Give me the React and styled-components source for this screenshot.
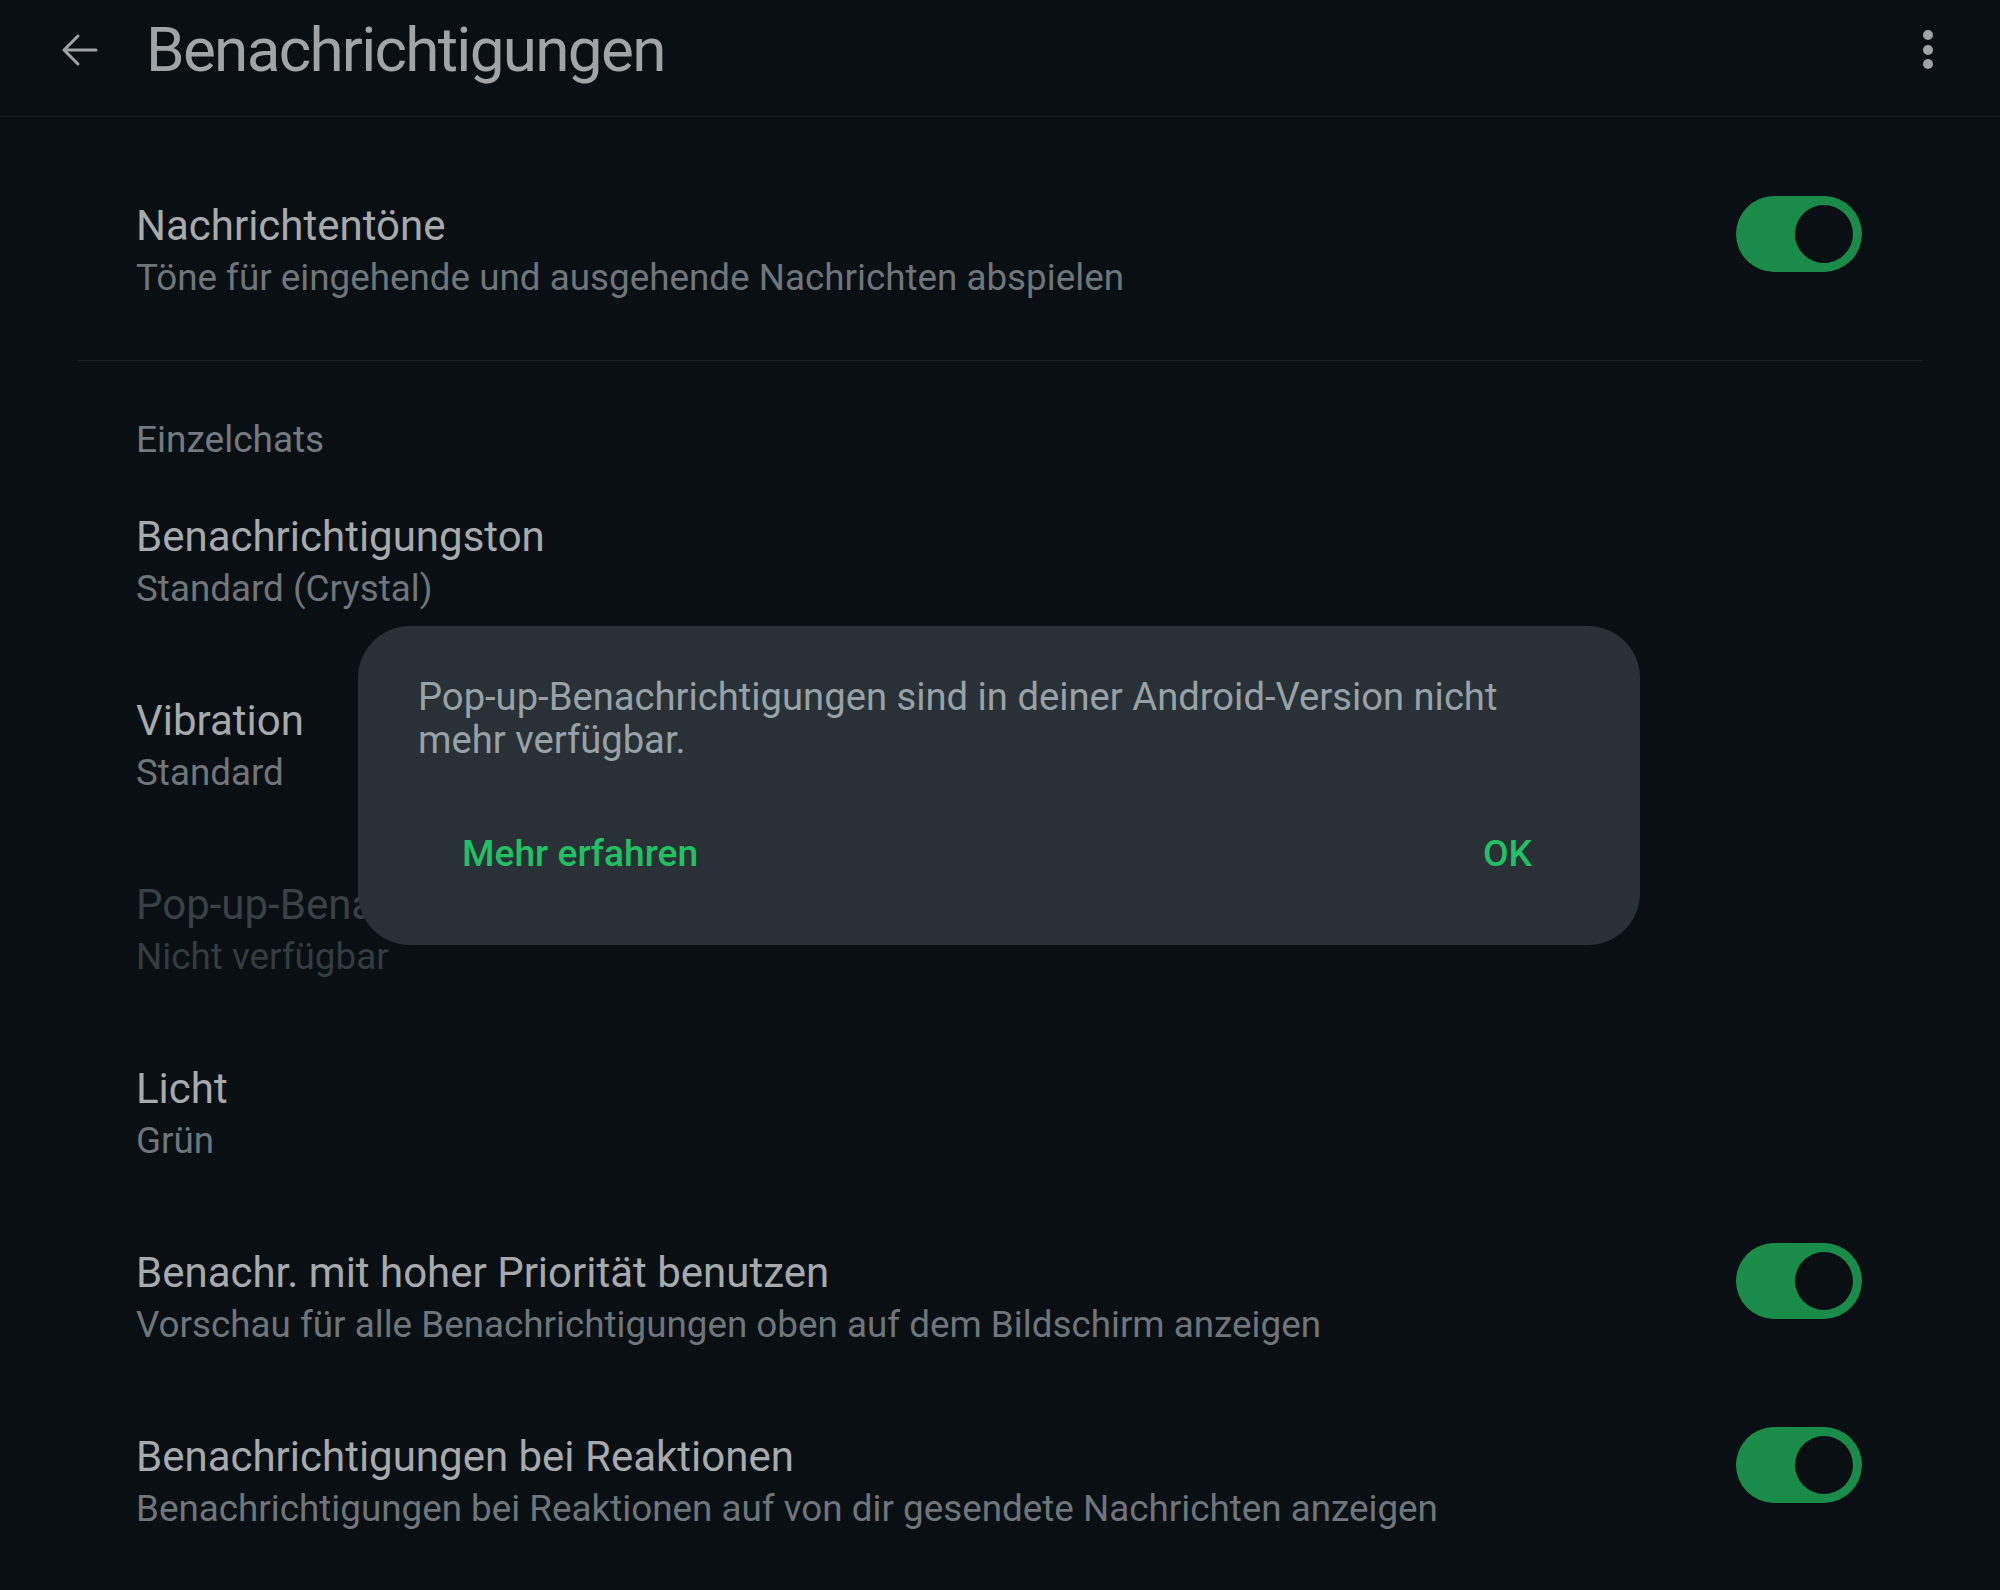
import React from "react";
import styled, { createGlobalStyle } from "styled-components";

const GlobalStyle = createGlobalStyle`
  html, body {
    margin: 0;
    padding: 0;
    background: #0a0f13;
  }
  * {
    box-sizing: border-box;
  }
`;

const Screen = styled.div`
  position: relative;
  width: 2000px;
  height: 1590px;
  overflow: hidden;
  background: #0a0f13;
  font-family: Roboto, "Liberation Sans", sans-serif;
`;

const Header = styled.header`
  display: flex;
  align-items: center;
  height: 117px;
  padding: 0 67px 17px 60px;
  border-bottom: 1px solid #161c20;
`;

const BackButton = styled.button`
  display: flex;
  align-items: center;
  justify-content: center;
  width: 38px;
  height: 34px;
  padding: 0;
  border: none;
  background: none;
  color: #a0a4a7;
`;

const Title = styled.h1`
  flex: 1;
  margin: 0 0 0 48px;
  font-size: 62px;
  font-weight: 400;
  line-height: 1;
  letter-spacing: -1.7px;
  color: #a0a4a7;
`;

const MenuDots = styled.div`
  display: flex;
  flex-direction: column;
  gap: 4.5px;

  span {
    width: 10px;
    height: 10px;
    border-radius: 50%;
    background: #a0a4a7;
  }
`;

const List = styled.main`
  padding-top: 43px;
`;

const Divider = styled.div`
  height: 1px;
  margin: 16px 77px 0;
  background: #1a2024;
`;

const SectionLabel = styled.div`
  padding: 53px 136px 5px;
  font-size: 37px;
  line-height: 52px;
  color: #737b81;
`;

const Row = styled.div`
  display: flex;
  align-items: flex-start;
  height: 184px;
  padding: 40px 138px 40px 136px;
`;

const RowText = styled.div`
  flex: 1;
  min-width: 0;
`;

const RowTitle = styled.div`
  font-size: 42px;
  line-height: 52px;
  white-space: nowrap;
  color: ${(p) => (p.$disabled ? "#394147" : "#a6aaad")};
`;

const RowSub = styled.div`
  font-size: 36.8px;
  line-height: 52px;
  white-space: nowrap;
  color: ${(p) => (p.$disabled ? "#343c41" : "#6e767c")};
`;

const Toggle = styled.div`
  position: relative;
  flex: none;
  width: 126px;
  height: 76px;
  margin-top: -4px;
  border-radius: 38px;
  background: ${(p) => (p.$on ? "#1b8b4a" : "#3a4248")};

  &::after {
    content: "";
    position: absolute;
    top: 9px;
    ${(p) => (p.$on ? "right: 9px;" : "left: 9px;")}
    width: 58px;
    height: 58px;
    border-radius: 50%;
    background: #0a0f13;
  }
`;

const Dialog = styled.div`
  position: absolute;
  left: 358px;
  top: 626px;
  width: 1282px;
  height: 319px;
  padding: 50px 60px 0;
  border-radius: 52px;
  background: #2a3136;
`;

const DialogText = styled.p`
  margin: 0;
  font-size: 38.2px;
  line-height: 43px;
  color: #97a1a8;
`;

const DialogActions = styled.div`
  display: flex;
  justify-content: space-between;
  margin-top: 61px;
  padding: 0 48px 0 44px;
`;

const TextButton = styled.button`
  padding: 0;
  border: none;
  background: none;
  font-family: Roboto, "Liberation Sans", sans-serif;
  font-size: 37.2px;
  font-weight: 500;
  line-height: 60px;
  color: #21c063;
`;

const rows = [
  { title: "Benachrichtigungston", sub: "Standard (Crystal)" },
  { title: "Vibration", sub: "Standard" },
  { title: "Pop-up-Benachrichtigungen", sub: "Nicht verfügbar", disabled: true },
  { title: "Licht", sub: "Grün" },
  {
    title: "Benachr. mit hoher Priorität benutzen",
    sub: "Vorschau für alle Benachrichtigungen oben auf dem Bildschirm anzeigen",
    toggle: true,
  },
  {
    title: "Benachrichtigungen bei Reaktionen",
    sub: "Benachrichtigungen bei Reaktionen auf von dir gesendete Nachrichten anzeigen",
    toggle: true,
  },
];

function SettingRow({ title, sub, toggle, disabled }) {
  return (
    <Row>
      <RowText>
        <RowTitle $disabled={disabled}>{title}</RowTitle>
        <RowSub $disabled={disabled}>{sub}</RowSub>
      </RowText>
      {toggle && <Toggle $on />}
    </Row>
  );
}

export default function App() {
  return (
    <Screen>
      <GlobalStyle />
      <Header>
        <BackButton aria-label="Zurück">
          <svg width="38" height="34" viewBox="0 0 38 34" fill="none">
            <path
              d="M36 17H4M18 3L4 17l14 14"
              stroke="currentColor"
              strokeWidth="3"
              strokeLinecap="round"
              strokeLinejoin="round"
            />
          </svg>
        </BackButton>
        <Title>Benachrichtigungen</Title>
        <MenuDots>
          <span />
          <span />
          <span />
        </MenuDots>
      </Header>

      <List>
        <SettingRow
          title="Nachrichtentöne"
          sub="Töne für eingehende und ausgehende Nachrichten abspielen"
          toggle
        />
        <Divider />
        <SectionLabel>Einzelchats</SectionLabel>
        {rows.map((r) => (
          <SettingRow key={r.title} {...r} />
        ))}
      </List>

      <Dialog role="dialog">
        <DialogText>
          Pop-up-Benachrichtigungen sind in deiner Android-Version nicht
          <br />
          mehr verfügbar.
        </DialogText>
        <DialogActions>
          <TextButton>Mehr erfahren</TextButton>
          <TextButton>OK</TextButton>
        </DialogActions>
      </Dialog>
    </Screen>
  );
}
